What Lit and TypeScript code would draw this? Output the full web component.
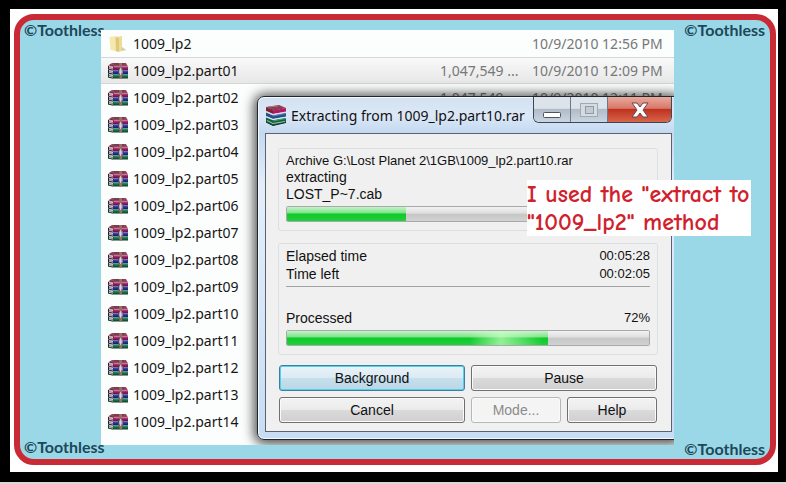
import { LitElement, html, css, svg } from "lit";
import { customElement } from "lit/decorators.js";
import { classMap } from "lit/directives/class-map.js";

interface FileRow {
  name: string;
  size?: string;
  date?: string;
  folder?: boolean;
  selected?: boolean;
}

const files: FileRow[] = [
  { name: "1009_lp2", date: "10/9/2010 12:56 PM", folder: true },
  { name: "1009_lp2.part01", size: "1,047,549 ...", date: "10/9/2010 12:09 PM", selected: true },
  { name: "1009_lp2.part02", size: "1,047,549 ...", date: "10/9/2010 12:11 PM" },
  ...["03", "04", "05", "06", "07", "08", "09", "10", "11", "12", "13", "14"].map((n) => ({
    name: `1009_lp2.part${n}`,
  })),
];

const bookColours = [
  ["#c9468c", "#8f1c58", "#4d1030"],
  ["#4a63c4", "#232f8c", "#141a50"],
  ["#3fa07a", "#1a6b44", "#0c3a22"],
];

const book = (y: number, c: string[]) => svg`
  <path d="M0 ${y} L6 ${y + 1} H20 V${y + 4} H5 L0 ${y + 3}Z" fill=${c[1]}></path>
  <path d="M6 ${y + 1} H20" stroke=${c[0]} stroke-width="1"></path>
  <path d="M5 ${y + 4} H20" stroke=${c[2]} stroke-width="1"></path>
  <path d="M0.500 ${y} L5 ${y + 1} V${y + 4} L0.500 ${y + 3}Z" fill="#ddd5d2"></path>
  <path d="M0.500 ${y + 1.5} L5 ${y + 2.5}" stroke="#6a6262" stroke-width=".8"></path>
  <path d="M0.500 ${y + 3.2} L5 ${y + 4.2} M0.500 ${y} V${y + 3.5}" stroke=${c[2]} fill="none" stroke-width="1"></path>`;

const archiveIcon = html`<svg class="icon" viewBox="0 0 20 16" aria-hidden="true">
  <path d="M0 2.500 L4 0 H18 L20 3.500 H6Z" fill="#8e4a5c"></path>
  <path d="M2 2 L6 3.500 M6 1 H16" stroke="#5d2a3a" stroke-width=".8"></path>
  ${book(3, bookColours[0])}${book(7, bookColours[1])}${book(11, bookColours[2])}
  <path d="M11 0 H14 V15.500 H11.500 V3Z" fill="#9a6f68"></path>
  <path d="M10.500 6 H15 V11 H10.500Z" fill="#b9a8c4" stroke="#4b3358" stroke-width=".8"></path>
  <path d="M12.700 5 V12" stroke="#e6dde0"></path>
</svg>`;

const folderIcon = html`<svg class="icon" viewBox="0 0 20 16" aria-hidden="true">
  <path d="M9 1 L14 0 V11 L18 14 L10 16Z" fill="#ecdc98"></path>
  <path d="M14 11 L18 14 L13 15Z" fill="#d5cfb4"></path>
  <path d="M1.500 1 L9 0 L11 2 V16 L2.500 14Z" fill="#f5e8ad"></path>
  <path d="M7.500 1 L11 2 V16 L8 15Z" fill="#dfc878"></path>
</svg>`;

const titleIcon = html`<svg class="title-icon" viewBox="0 0 20 21" aria-hidden="true">
  <path d="M0 2 L13 0 L20 3 L7 6Z" fill="#8c4150"></path>
  <path d="M2 2 L12 1" stroke="#b8737d"></path>
  <path d="M0 2 L7 5.500 V9 L0 6Z" fill="#7b2238"></path>
  <path d="M7 5.500 L20 3 V6.500 L7 9Z" fill="#b01a62"></path>
  <path d="M0 6 L7 9 L19 7 V8 L7 10.500 L1 7.500Z" fill="#e5d8dd"></path>
  <path d="M0 7.500 L7 10.500 L20 8 V11.500 L7 14 L0 11Z" fill="#24508c"></path>
  <path d="M7 11 L20 8.500" stroke="#5b8cc4" stroke-width=".8"></path>
  <path d="M1 11.500 L7 14 L19 12 V13 L7 15.300 L1 12.500Z" fill="#dfe6ec"></path>
  <path d="M0 12.500 L7 15.300 L20 13 V17.500 L7 20.500 L0 17Z" fill="#12603c"></path>
  <path d="M7 16 L20 13.500" stroke="#3fa37a"></path>
  <path d="M1 15.500 L7 18.500 L19 16.500" fill="none" stroke="#c9dcd2" stroke-width=".8"></path>
  <path d="M0 17 L7 20.500 L20 17.500" fill="none" stroke="#0a3020"></path>
</svg>`;

@customElement("app-root")
export class AppRoot extends LitElement {
  static styles = css`
    :host {
      display: block;
      --ui: "Liberation Sans", Arial, sans-serif;
      --shell: "Noto Sans", "Open Sans", sans-serif;
    }
    * {
      box-sizing: border-box;
    }
    .mat {
      background: #000;
      padding: 9px 8px 10px 10px;
      border-bottom: 2px solid #d8d8d8;
    }
    .paper {
      background: #fff;
      padding: 5px 2px 7px 4px;
    }
    .card {
      position: relative;
      display: grid;
      grid-template-columns: 81px minmax(0, 1fr) 96px;
      border: 6px solid #c92a35;
      border-radius: 20px;
      background: #9ad8e8;
    }
    .side {
      display: flex;
      flex-direction: column;
      justify-content: space-between;
      padding: 0 5px 2px 4px;
      font: 700 16px/20px Lato, sans-serif;
      color: #1c4858;
      white-space: nowrap;
    }
    .side.right {
      align-items: flex-end;
      padding-bottom: 0;
    }
    .shot {
      position: relative;
      overflow: hidden;
      margin: 10px 0 14px;
      padding-bottom: 10px;
      background: #fcfdfd;
    }
    table {
      width: 100%;
      border-collapse: separate;
      border-spacing: 0;
      table-layout: fixed;
      font: 14px/25px var(--shell);
    }
    .c-size {
      width: 76px;
    }
    .c-date {
      width: 158px;
    }
    td {
      height: 27px;
      padding: 0;
      border: solid transparent;
      border-width: 1px 0;
      color: #777;
      white-space: nowrap;
    }
    td.name {
      color: #151515;
    }
    .cell {
      display: flex;
      align-items: center;
      gap: 5px;
      padding-left: 7px;
    }
    td.date {
      padding-left: 16px;
    }
    .selected td {
      border-color: #d6d6d6;
      background: linear-gradient(#f9f9f9, #e7e7e7);
    }
    .icon {
      width: 20px;
      height: 16px;
    }
    .dialog {
      position: absolute;
      top: 66px;
      left: 156px;
      right: -6px;
      padding: 0 7px 7px;
      border: 1px solid #20262e;
      border-radius: 7px;
      background: linear-gradient(#d3e0f0, #dce8f7 18px, #c4d9f1 36px, #e4eefa 90px, #c8dcf5);
      box-shadow: inset 0 0 0 1px #f4f9ff, 0 1px 12px 3px rgba(0, 0, 0, 0.7);
      font: 14px/17px var(--ui);
      color: #111;
    }
    .titlebar {
      display: flex;
      align-items: flex-start;
      height: 36px;
    }
    .title-icon {
      width: 20px;
      height: 21px;
      margin: 8px 5px 0 1px;
    }
    h1 {
      flex: 1;
      margin: 0;
      font: 14px/37px var(--shell);
      white-space: nowrap;
    }
    .caption {
      display: flex;
      border: 1px solid #3d4855;
      border-top: 0;
      border-radius: 0 0 6px 6px;
      overflow: hidden;
    }
    .caption button {
      display: grid;
      place-items: center;
      width: 37px;
      height: 25px;
      padding: 0;
      border: 0;
      border-right: 1px solid #6d7884;
      background: linear-gradient(#dde3ea 45%, #b2bcc8 50%, #c9d5e2);
    }
    .caption svg {
      display: block;
    }
    .caption .close {
      width: 63px;
      border: 0;
      background: linear-gradient(#e8a99b, #d9796a 45%, #bf3220 50%, #d8654a);
    }
    .client {
      padding: 14px 13px 8px 12px;
      border: 1px solid #59626e;
      background: #f0f0f0;
    }
    fieldset {
      margin: 0 0 12px;
      padding: 3px 7px 8px;
      border: 1px solid #dcdfe0;
      border-radius: 3px;
      min-width: 0;
    }
    p {
      margin: 0;
      white-space: nowrap;
    }
    .small {
      font-size: 13px;
    }
    .pair {
      display: flex;
      justify-content: space-between;
      line-height: 18px;
    }
    .rule {
      margin: 3px 0 22px;
      border: 0;
      border-top: 1px solid #a2a2a2;
    }
    progress {
      display: block;
      width: 100%;
      height: 16px;
      margin-top: 3px;
      appearance: none;
      border: 1px solid #a9a9a9;
      border-radius: 2px;
      overflow: hidden;
      background: none;
    }
    progress::-webkit-progress-bar {
      background: linear-gradient(#f2f2f2, #dedede 45%, #c6c6c6 50%, #d2d2d2);
    }
    progress::-webkit-progress-value {
      background: linear-gradient(#c4f3c8, #7fe48a 42%, #0fc92b 50%, #1fd03a);
    }
    progress.total::-webkit-progress-value {
      background: linear-gradient(90deg, transparent 70%, rgba(200, 255, 195, 0.7) 82%, transparent 98%),
        linear-gradient(#c4f3c8, #7fe48a 42%, #0fc92b 50%, #1fd03a);
    }
    .actions {
      display: grid;
      grid-template-columns: repeat(4, 1fr);
      gap: 6px;
      padding: 0 1px;
      margin-top: -2px;
    }
    .actions button {
      height: 26px;
      padding: 0;
      border: 1px solid #707070;
      border-radius: 3px;
      background: linear-gradient(#f3f3f3, #ebebeb 50%, #dadada 52%, #d0d0d0);
      box-shadow: inset 0 0 0 1px #fafafa;
      font: 14px/17px var(--ui);
      color: #111;
    }
    .actions .wide {
      grid-column: span 2;
    }
    .actions .default {
      border-color: #3c7f9f;
      background: linear-gradient(#eaf3f8, #dbeaf3 50%, #c6dfec 52%, #bcd6e4);
      box-shadow: inset 0 0 0 1px #52d0f2;
    }
    .actions button:disabled {
      border-color: #b5b8b9;
      background: #f4f4f4;
      color: #8b8b8b;
    }
    .note {
      position: absolute;
      top: 160px;
      right: 19px;
      width: 224px;
      background: #fff;
      color: #d0222d;
      font: 700 24px/28px "Comic Sans MS", "Comic Neue", Lato, sans-serif;
    }
  `;

  render() {
    return html`
      <div class="mat">
        <div class="paper">
          <main class="card">
            <div class="side"><span>©Toothless</span><span>©Toothless</span></div>
            <section class="shot">
              <table aria-label="Files">
                <colgroup>
                  <col />
                  <col class="c-size" />
                  <col class="c-date" />
                </colgroup>
                <tbody>
                  ${files.map(
                    (f) => html`<tr class=${classMap({ selected: !!f.selected })}>
                      <td class="name">
                        <div class="cell">${f.folder ? folderIcon : archiveIcon}<span>${f.name}</span></div>
                      </td>
                      <td class="size">${f.size ?? ""}</td>
                      <td class="date">${f.date ?? ""}</td>
                    </tr>`
                  )}
                </tbody>
              </table>
              <div class="dialog" role="dialog" aria-labelledby="title">
                <div class="titlebar">
                  ${titleIcon}
                  <h1 id="title">Extracting from 1009_lp2.part10.rar</h1>
                  <div class="caption">
                    <button aria-label="Minimize">
                      <svg width="20" height="20" viewBox="0 0 20 20">
                        <rect x="1.500" y="12.500" width="17" height="5" rx="1" fill="#fff" stroke="#4d5260"></rect>
                      </svg>
                    </button>
                    <button aria-label="Maximize">
                      <svg width="20" height="18" viewBox="0 0 20 18">
                        <rect x="1.500" y="2.500" width="17" height="13" fill="#d5dbe0" stroke="#a0aab4"></rect>
                        <rect x="6.500" y="5.500" width="8" height="7" fill="#c3cbd3" stroke="#8f9aa5"></rect>
                      </svg>
                    </button>
                    <button class="close" aria-label="Close">
                      <svg width="20" height="18" viewBox="0 0 20 18">
                        <path
                          d="M2 2 H7 L10 6 L13 2 H18 L13 9 L18 16 H13 L10 12 L7 16 H2 L7 9Z"
                          fill="#fff"
                          stroke="#67444a"
                        ></path>
                      </svg>
                    </button>
                  </div>
                </div>
                <div class="client">
                  <fieldset aria-label="Current file">
                    <p class="small">Archive G:\\Lost Planet 2\\1GB\\1009_lp2.part10.rar</p>
                    <p>extracting</p>
                    <p>LOST_P~7.cab</p>
                    <progress max="100" value="33" aria-label="Current file"></progress>
                  </fieldset>
                  <fieldset aria-label="Whole archive">
                    <p class="pair"><span>Elapsed time</span><span class="small">00:05:28</span></p>
                    <p class="pair"><span>Time left</span><span class="small">00:02:05</span></p>
                    <hr class="rule" />
                    <p class="pair"><label for="total">Processed</label><span class="small">72%</span></p>
                    <progress class="total" id="total" max="100" value="72"></progress>
                  </fieldset>
                  <div class="actions">
                    <button class="wide default">Background</button>
                    <button class="wide">Pause</button>
                    <button class="wide">Cancel</button>
                    <button disabled>Mode...</button>
                    <button>Help</button>
                  </div>
                </div>
              </div>
            </section>
            <div class="side right"><span>©Toothless</span><span>©Toothless</span></div>
            <p class="note">I used the "extract to<br />"1009_lp2" method</p>
          </main>
        </div>
      </div>
    `;
  }
}
